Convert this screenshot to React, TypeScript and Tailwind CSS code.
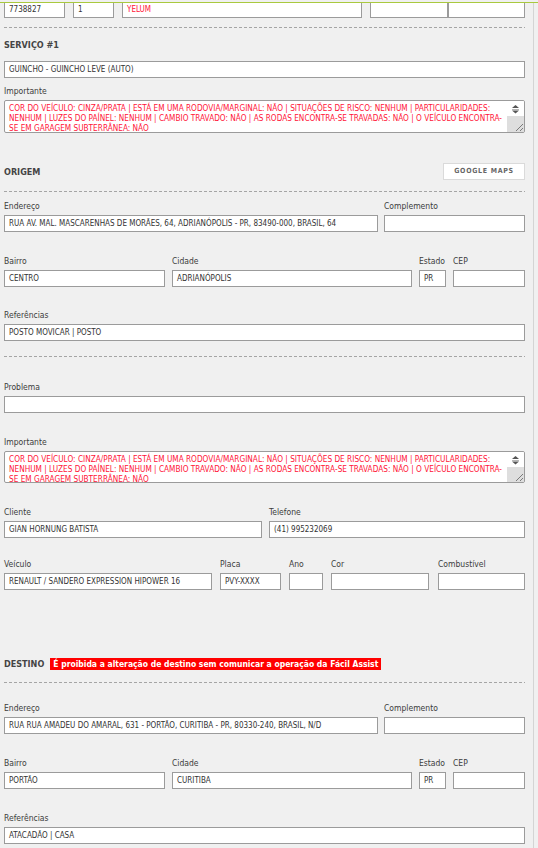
import React from 'react';

const FONT = "font-['DejaVu_Sans_Condensed','DejaVu_Sans',sans-serif] font-stretch-condensed";

const NOTE_LINES = [
    'COR DO VEÍCULO: CINZA/PRATA | ESTÁ EM UMA RODOVIA/MARGINAL: NÃO | SITUAÇÕES DE RISCO: NENHUM | PARTICULARIDADES:',
    'NENHUM | LUZES DO PAÍNEL: NENHUM | CAMBIO TRAVADO: NÃO | AS RODAS ENCONTRA-SE TRAVADAS: NÃO | O VEÍCULO ENCONTRA-',
    'SE EM GARAGEM SUBTERRÂNEA: NÃO',
];

const Input = ({ value, red }: { value?: string; red?: boolean }) => (
    <div
        className={`h-[17px] border border-[#9b9b9b] bg-white pl-[4px] flex items-center text-[8px] leading-none whitespace-nowrap overflow-hidden ${
            red ? 'text-[#ff1438]' : 'text-[#333]'
        }`}
    >
        {value}
    </div>
);

const Label = ({ children }: { children: React.ReactNode }) => (
    <div className="h-[13px] leading-[13px] mb-[2px] text-[8.5px] text-[#3c3c3c] whitespace-nowrap">{children}</div>
);

interface FieldProps {
    label: string;
    value?: string;
    className?: string;
}

const Field = ({ label, value, className }: FieldProps) => (
    <div className={className}>
        <Label>{label}</Label>
        <Input value={value} />
    </div>
);

const Dashed = ({ className }: { className?: string }) => (
    <div
        className={`h-px bg-[repeating-linear-gradient(to_right,#a5a5a5_0_3px,transparent_3px_5px)] ${className ?? ''}`}
    />
);

const Heading = ({ children }: { children: React.ReactNode }) => (
    <div className="text-[9px] font-bold leading-[14px] text-[#444] whitespace-nowrap">{children}</div>
);

const Note = ({ height }: { height: string }) => (
    <div className={`flex ${height} border border-[#9b9b9b] rounded-[2px] bg-white overflow-hidden`}>
        <div className="flex-1 min-w-0 pl-[4px] pt-[2px] text-[8.2px] leading-[10px] text-[#ff1438] overflow-hidden whitespace-nowrap">
            {NOTE_LINES.map(line => (
                <div key={line}>{line}</div>
            ))}
        </div>
        <div className="w-[17px] flex flex-col">
            <div className="h-[15px] bg-white flex items-center justify-center">
                <svg width="9" height="11" viewBox="0 0 9 11">
                    <path d="M4.5 2 L8 5 L1 5 Z" fill="#555" />
                    <path d="M1 6.5 H8" stroke="#b5b5b5" strokeWidth="1" />
                    <path d="M1 7.5 L8 7.5 L4.5 10.5 Z" fill="#555" />
                </svg>
            </div>
            <div className="flex-1 bg-[#dedede] flex items-end justify-end">
                <svg width="9" height="9" viewBox="0 0 9 9">
                    <path d="M1 8 L8 1 M5 8 L8 5" stroke="#7a7a7a" strokeWidth="1" />
                </svg>
            </div>
        </div>
    </div>
);

const TopBox = ({ value, className, red }: { value?: string; className: string; red?: boolean }) => (
    <div
        className={`${className} h-[15px] border-x border-b border-[#9b9b9b] bg-white pl-[4px] flex items-center text-[8px] leading-none whitespace-nowrap ${
            red ? 'text-[#ff1438]' : 'text-[#333]'
        }`}
    >
        {value}
    </div>
);

export default function App() {
    return (
        <div className={`w-[538px] h-[848px] overflow-hidden bg-[#f0f0f0] pt-[2px] ${FONT}`}>
            <div className="h-px bg-[#a9c93e]" />
            <div className="flex">
                <div className="w-[534px] border-r border-[#d4d4d4] pl-[4px] pr-[8px] pb-[40px]">
                    {/* linha de cima */}
                    <div className="flex">
                        <TopBox className="w-[61px]" value="7738827" />
                        <TopBox className="w-[41px] ml-[8px]" value="1" />
                        <TopBox className="w-[240px] ml-[8px]" value="YELUM" red />
                        <TopBox className="w-[78px] ml-[8px]" />
                        <TopBox className="w-[77px]" />
                    </div>

                    <Dashed className="mt-[9px]" />

                    {/* serviço */}
                    <div className="mt-[10px]">
                        <Heading>SERVIÇO #1</Heading>
                    </div>
                    <div className="mt-[9px]">
                        <Input value="GUINCHO - GUINCHO LEVE (AUTO)" />
                    </div>
                    <div className="mt-[7px]">
                        <Label>Importante</Label>
                        <Note height="h-[33px]" />
                    </div>

                    {/* origem */}
                    <div className="mt-[30px] flex items-center h-[17px]">
                        <Heading>ORIGEM</Heading>
                        <button className="ml-auto w-[82px] h-[17px] border border-[#dadada] bg-white text-[7px] font-bold tracking-[0.7px] text-[#666] flex items-center justify-center">
                            GOOGLE MAPS
                        </button>
                    </div>
                    <Dashed className="mt-[11px]" />

                    <div className="mt-[8px] flex gap-[6px]">
                        <Field
                            className="w-[374px]"
                            label="Endereço"
                            value="RUA AV. MAL. MASCARENHAS DE MORÃES, 64, ADRIANÓPOLIS - PR, 83490-000, BRASIL, 64"
                        />
                        <Field className="w-[141px]" label="Complemento" />
                    </div>
                    <div className="mt-[23px] flex gap-[7px]">
                        <Field className="w-[161px]" label="Bairro" value="CENTRO" />
                        <Field className="w-[240px]" label="Cidade" value="ADRIANÓPOLIS" />
                        <Field className="w-[27px]" label="Estado" value="PR" />
                        <Field className="w-[72px]" label="CEP" />
                    </div>
                    <Field className="mt-[22px]" label="Referências" value="POSTO MOVICAR | POSTO" />

                    <Dashed className="mt-[15px]" />

                    <Field className="mt-[24px]" label="Problema" />
                    <div className="mt-[23px]">
                        <Label>Importante</Label>
                        <Note height="h-[32px]" />
                    </div>

                    <div className="mt-[23px] flex gap-[7px]">
                        <Field className="w-[258px]" label="Cliente" value="GIAN HORNUNG BATISTA" />
                        <Field className="w-[256px]" label="Telefone" value="(41) 995232069" />
                    </div>
                    <div className="mt-[20px] flex">
                        <Field className="w-[208px]" label="Veículo" value="RENAULT / SANDERO EXPRESSION HIPOWER 16" />
                        <Field className="w-[61px] ml-[8px]" label="Placa" value="PVY-XXXX" />
                        <Field className="w-[34px] ml-[8px]" label="Ano" />
                        <Field className="w-[98px] ml-[8px]" label="Cor" />
                        <Field className="w-[87px] ml-[9px]" label="Combustível" />
                    </div>

                    {/* destino */}
                    <div className="mt-[68px] flex items-center h-[12px]">
                        <Heading>DESTINO</Heading>
                        <span className="ml-[6px] h-[12px] px-[3px] bg-[#ff0000] text-white font-bold text-[8.5px] leading-[12px] whitespace-nowrap">
                            É proibida a alteração de destino sem comunicar a operação da Fácil Assist
                        </span>
                    </div>
                    <Dashed className="mt-[12px]" />

                    <div className="mt-[19px] flex gap-[6px]">
                        <Field
                            className="w-[374px]"
                            label="Endereço"
                            value="RUA RUA AMADEU DO AMARAL, 631 - PORTÃO, CURITIBA - PR, 80330-240, BRASIL, N/D"
                        />
                        <Field className="w-[141px]" label="Complemento" />
                    </div>
                    <div className="mt-[23px] flex gap-[7px]">
                        <Field className="w-[161px]" label="Bairro" value="PORTÃO" />
                        <Field className="w-[240px]" label="Cidade" value="CURITIBA" />
                        <Field className="w-[27px]" label="Estado" value="PR" />
                        <Field className="w-[72px]" label="CEP" />
                    </div>
                    <Field className="mt-[23px]" label="Referências" value="ATACADÃO | CASA" />
                </div>
            </div>
        </div>
    );
}
